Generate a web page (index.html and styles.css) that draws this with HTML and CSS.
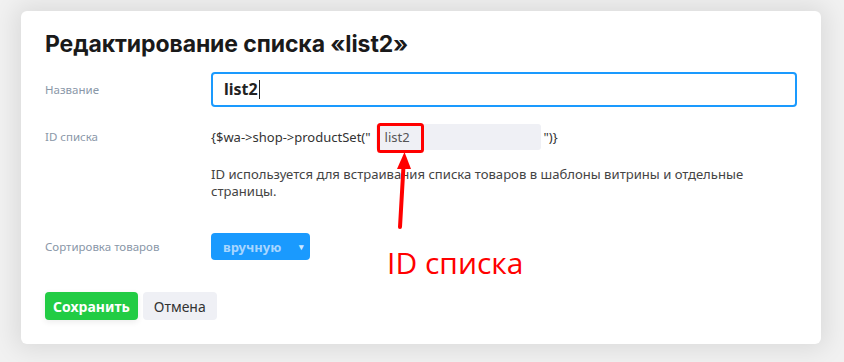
FILE: index.html
```html
<!DOCTYPE html>
<html>
<head>
  <title>Редактирование списка</title>
  <link rel="stylesheet" href="styles.css">
</head>
<body>

  <div class="dialog">
    <h1>Редактирование списка «list2»</h1>

    <div class="field">
      <div class="label">Название</div>
      <div class="value">
        <div class="input">list2<span class="caret"></span></div>
      </div>
    </div>

    <div class="field field-id">
      <div class="label">ID списка</div>
      <div class="value">
        <div class="code">
          <span>{$wa-&gt;shop-&gt;productSet("</span>
          <span class="id-input"><span class="id-text">list2</span></span>
          <span>")}</span>
        </div>
        <p class="hint">ID используется для встраивания списка товаров в шаблоны витрины и отдельные страницы.</p>
      </div>
    </div>

    <div class="field field-sort">
      <div class="label">Сортировка товаров</div>
      <div class="value">
        <button class="select">вручную <span class="arrow">▾</span></button>
      </div>
    </div>

    <div class="actions">
      <button class="btn btn-save">Сохранить</button>
      <button class="btn btn-cancel">Отмена</button>
    </div>
  </div>

  <!-- annotation on top of the screenshot -->
  <svg class="pointer" width="844" height="362" viewBox="0 0 844 362">
    <rect x="378.5" y="124.5" width="44" height="27" fill="none" stroke="#ff0000" stroke-width="3" rx="2"/>
    <line x1="400" y1="227" x2="403.5" y2="166" stroke="#ff0000" stroke-width="4" stroke-linecap="round"/>
    <polygon points="404.5,152 397,169 411,169" fill="#ff0000"/>
  </svg>
  <div class="note">ID списка</div>

</body>
</html>
```

FILE: styles.css
```css
body {
  margin: 0;
  background: #f1f1f1;
  font-family: "Noto Sans", "Open Sans", sans-serif;
  color: #333;
  height: 362px;
  overflow: hidden;
}

.dialog {
  box-sizing: border-box;
  width: 800px;
  height: 333px;
  margin: 11px 0 0 21px;
  padding: 18px 24px 0;
  background: #fff;
  border-radius: 6px;
  box-shadow: 0 0 24px 6px rgba(0, 0, 0, 0.09);
}

h1 {
  margin: 0 0 13px;
  font-family: Inter, "Noto Sans", sans-serif;
  font-size: 23px;
  font-weight: 700;
  line-height: 30px;
  color: #1a1a1a;
  letter-spacing: -0.1px;
}

.field {
  display: grid;
  grid-template-columns: 166px 1fr;
  align-items: start;
}

.label {
  font-size: 11.5px;
  color: #8a97a8;
  line-height: 35px;
}

.input {
  box-sizing: border-box;
  height: 35px;
  width: 586px;
  border: 2px solid #1a9afe;
  border-radius: 4px;
  padding: 0 11px;
  font-size: 16px;
  font-weight: 700;
  line-height: 31px;
  color: #222;
}

.caret {
  display: inline-block;
  width: 1px;
  height: 19px;
  background: #222;
  vertical-align: -4px;
  margin-left: 1px;
}

.field-id {
  margin-top: 17px;
}

.field-id .label {
  line-height: 26px;
}

.code {
  display: flex;
  align-items: center;
  height: 26px;
  font-size: 13px;
  color: #333;
}

.id-input {
  box-sizing: border-box;
  width: 165px;
  height: 26px;
  margin: 0 3px 0 5px;
  padding: 0 9px;
  background: #eff0f5;
  border-radius: 3px;
  line-height: 26px;
  color: #555;
}

.hint {
  margin: 16px 0 0;
  width: 560px;
  font-size: 13.1px;
  line-height: 17px;
  color: #444;
}

.field-sort {
  margin-top: 33px;
}

.field-sort .label {
  line-height: 27px;
}

.select {
  box-sizing: border-box;
  width: 99px;
  height: 27px;
  padding: 0 0 0 12px;
  border: none;
  border-radius: 4px;
  background: #1a9afe;
  color: #a8d6ff;
  font-family: inherit;
  font-size: 13px;
  font-weight: 700;
  text-align: left;
  display: flex;
  align-items: center;
}

.select .arrow {
  margin-left: auto;
  margin-right: 6px;
  font-size: 9px;
  color: #cfe8ff;
}

.actions {
  display: flex;
  gap: 5px;
  margin-top: 32px;
}

.btn {
  height: 28px;
  border: none;
  border-radius: 4px;
  padding: 0 11px;
  font-family: inherit;
  font-size: 14px;
  cursor: pointer;
}

.btn-save {
  padding: 0 8px;
  background: #22cc44;
  color: #fff;
  font-weight: 700;
  box-shadow: 0 2px 6px rgba(0, 0, 0, 0.08);
}

.btn-cancel {
  background: #eff0f5;
  color: #333;
}

.pointer {
  position: absolute;
  left: 0;
  top: 0;
}

.note {
  position: absolute;
  left: 387px;
  top: 245px;
  font-family: "Open Sans", sans-serif;
  font-size: 30px;
  line-height: 36px;
  color: #ff0000;
}
```
